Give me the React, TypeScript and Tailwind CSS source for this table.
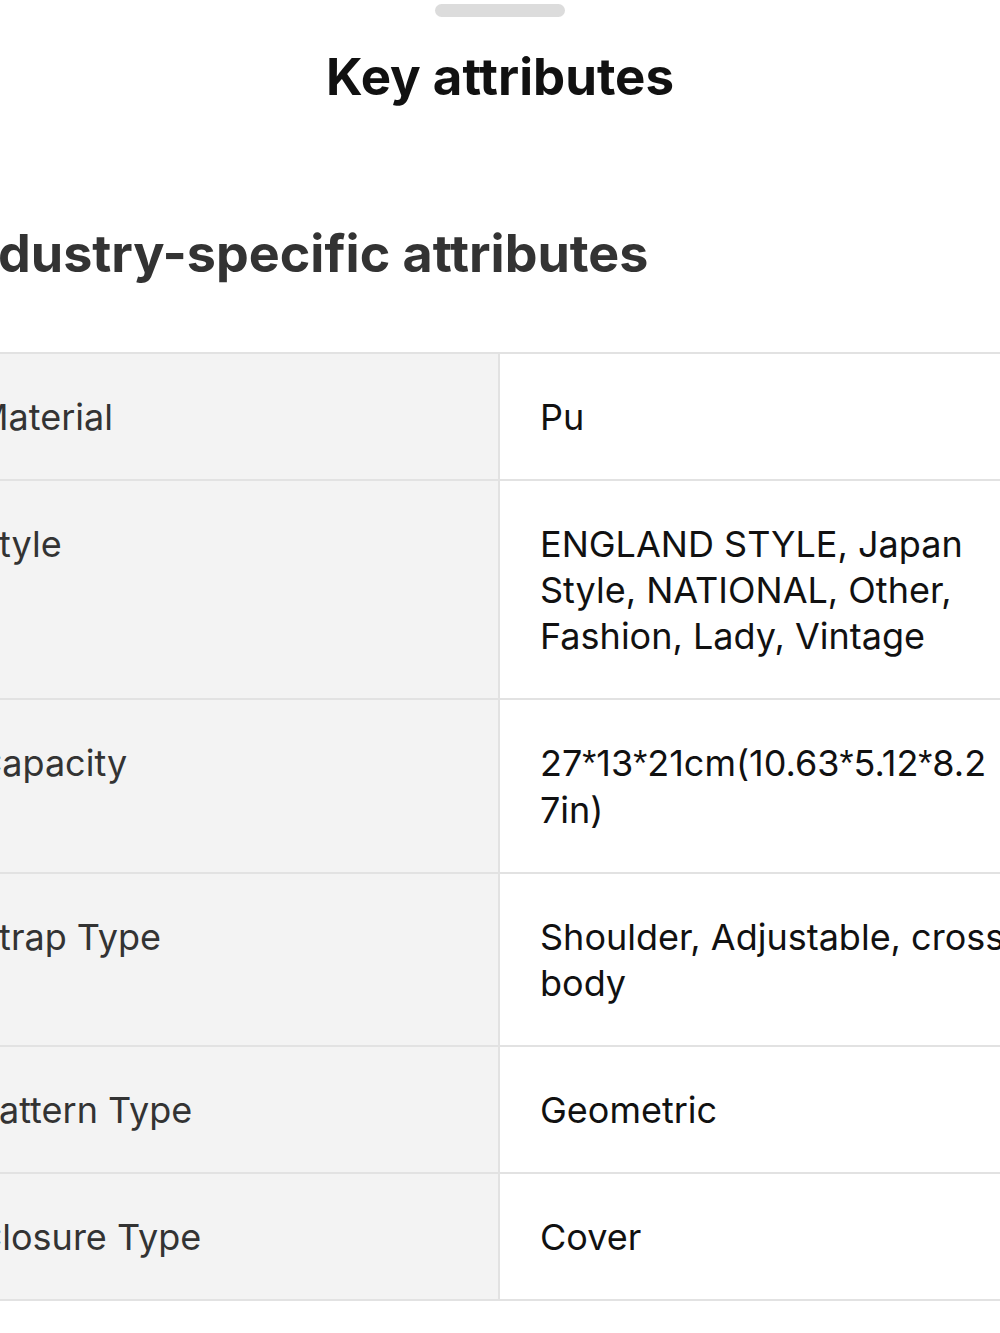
const rows: { label: string; value: string[] }[] = [
  { label: "Material", value: ["Pu"] },
  { label: "Style", value: ["ENGLAND STYLE, Japan", "Style, NATIONAL, Other,", "Fashion, Lady, Vintage"] },
  { label: "Capacity", value: ["27*13*21cm(10.63*5.12*8.2", "7in)"] },
  { label: "Strap Type", value: ["Shoulder, Adjustable, cross", "body"] },
  { label: "Pattern Type", value: ["Geometric"] },
  { label: "Closure Type", value: ["Cover"] },
];

// asterisks sit high in the reference font, so give them Arial's raised glyph
function Line({ text }: { text: string }) {
  const parts = text.split("*");
  return (
    <div className="whitespace-nowrap">
      {parts.map((p, i) => (
        <span key={i}>
          {p}
          {i < parts.length - 1 && (
            <span style={{ fontFamily: "'Liberation Sans', sans-serif" }}>*</span>
          )}
        </span>
      ))}
    </div>
  );
}

export default function App() {
  return (
    <div
      className="w-[1000px] h-[1333px] overflow-hidden bg-white"
      style={{ fontFamily: "Inter, 'Liberation Sans', sans-serif" }}
    >
      {/* drag handle */}
      <div className="flex justify-center pt-[4px]">
        <div className="w-[130px] h-[13px] rounded-full bg-[#dcdcdc]" />
      </div>

      <h1 className="mt-[27px] text-center text-[51px] leading-[66px] font-bold text-[#111]">
        Key attributes
      </h1>

      <div className="-ml-[55px] w-[1110px]">
        <h2 className="mt-[112px] pl-[6px] text-[52px] leading-[64px] font-bold text-[#333]">
          Industry-specific attributes
        </h2>

        <div className="mt-[66px] border-t-2 border-[#e2e2e2]">
          {rows.map((row) => (
            <div key={row.label} className="grid grid-cols-[555px_555px] border-b-2 border-[#e2e2e2]">
              <div className="bg-[#f3f3f3] border-r-2 border-[#e2e2e2] pl-[31px] pr-[40px] pt-[40px] pb-[39px] text-[36px] leading-[46px] text-[#333]">
                {row.label}
              </div>
              <div className="pl-[40px] pt-[40px] pb-[39px] text-[36px] leading-[46px] text-[#111]">
                {row.value.map((line) => (
                  <Line key={line} text={line} />
                ))}
              </div>
            </div>
          ))}
        </div>
      </div>
    </div>
  );
}
